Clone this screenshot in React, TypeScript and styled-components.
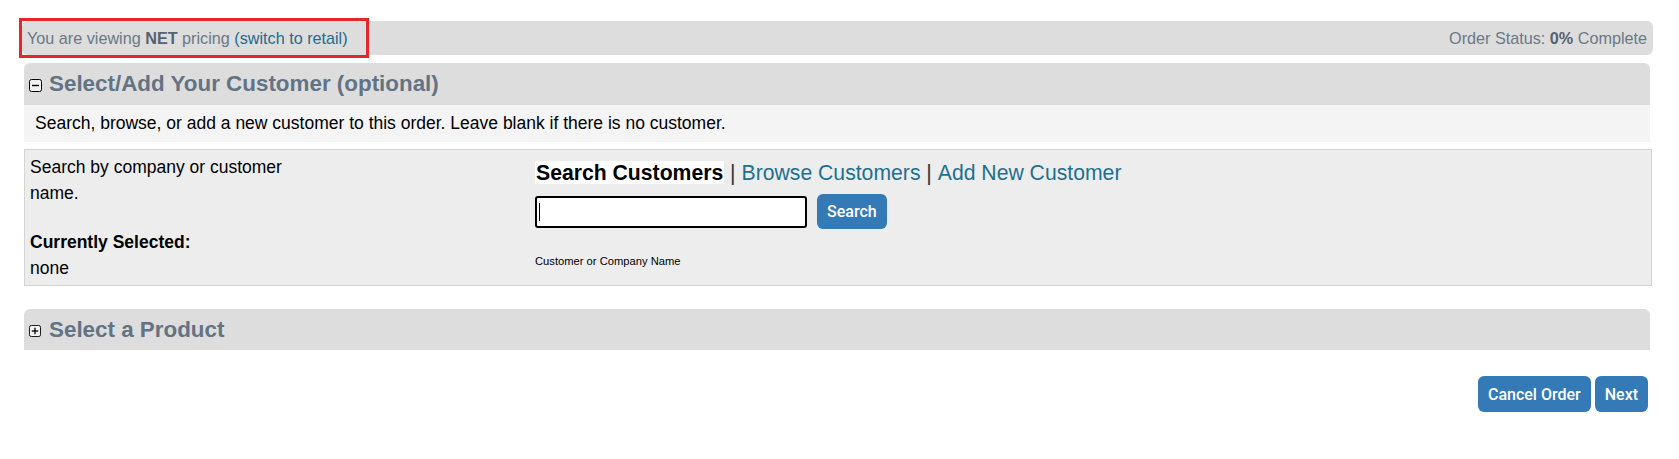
import React from "react";
import styled, { createGlobalStyle } from "styled-components";

const GlobalStyle = createGlobalStyle`
  html, body {
    margin: 0;
    padding: 0;
    background: #ffffff;
    font-family: "Liberation Sans", Arial, sans-serif;
  }
`;

const Page = styled.div`
  padding: 21px 26px 0 22px;
`;

const StatusBar = styled.div`
  display: flex;
  justify-content: space-between;
  align-items: stretch;
  height: 34px;
  background: #dddddd;
  border-radius: 6px;
  font-size: 16.2px;
  color: #6a7886;
`;

const PricingNote = styled.div`
  display: flex;
  align-items: center;
  padding: 0 18px 0 5px;
  outline: 3px solid #e5262a;
  white-space: pre;
`;

const OrderStatus = styled.div`
  display: flex;
  align-items: center;
  padding-right: 6px;
  white-space: pre;
`;

const Strong = styled.b`
  color: #56626e;
`;

const Link = styled.a`
  color: #1f6b8c;
  text-decoration: none;
  cursor: pointer;
`;

const Section = styled.section<{ $gap: number }>`
  margin: ${(p) => p.$gap}px 3px 0 2px;
`;

const SectionHeader = styled.div<{ $height: number }>`
  display: flex;
  align-items: center;
  height: ${(p) => p.$height}px;
  padding-left: 5px;
  background: #dddddd;
  border-radius: 6px 6px 0 0;
`;

const IconSlot = styled.span`
  display: flex;
  align-items: center;
  justify-content: flex-start;
  width: 20px;
  margin-top: 3px;
`;

const SectionTitle = styled.h2`
  margin: 0;
  font-size: 22.4px;
  font-weight: bold;
  color: #637384;
`;

const Description = styled.div`
  display: flex;
  align-items: center;
  height: 37px;
  padding-left: 11px;
  background: #f4f4f4;
  font-size: 17.5px;
  color: #000;
`;

const SearchPanel = styled.div`
  display: grid;
  grid-template-columns: 510px 1fr;
  margin: 7px -2px 0 0;
  height: 137px;
  box-sizing: border-box;
  border: 1px solid #d4d4d4;
  background: #ededed;
`;

const HelpColumn = styled.div`
  padding: 5px 5px 0;
  font-size: 17.5px;
  line-height: 25.5px;
  color: #000;
`;

const HelpText = styled.p`
  margin: 0 0 24px;
  max-width: 290px;
`;

const SelectedLabel = styled.div`
  font-weight: bold;
`;

const SearchColumn = styled.div`
  display: flex;
  flex-direction: column;
  padding-top: 11px;
`;

const TabRow = styled.div`
  display: flex;
  align-items: center;
  font-size: 21.2px;
  line-height: 23px;
  color: #333;
  white-space: pre;
`;

const ActiveTab = styled.span`
  background: #ffffff;
  color: #000;
  font-weight: bold;
  padding: 0 1px;
`;

const TabLink = styled.a`
  color: #21708f;
  text-decoration: none;
  cursor: pointer;
`;

const SearchRow = styled.div`
  display: flex;
  align-items: center;
  gap: 10px;
  margin-top: 10px;
`;

const InputWrap = styled.span`
  position: relative;
  display: inline-flex;
`;

const SearchInput = styled.input`
  width: 272px;
  height: 32px;
  box-sizing: border-box;
  border: 2px solid #000;
  border-radius: 3px;
  background: #fff;
  padding: 0 4px;
  font-size: 16px;
  font-family: "Liberation Sans", Arial, sans-serif;
  outline: none;
`;

/* text cursor sitting at the start of the focused field */
const Caret = styled.span`
  position: absolute;
  left: 4px;
  top: 7px;
  width: 1px;
  height: 18px;
  background: #000;
  pointer-events: none;
`;

const Button = styled.button<{ $height: number }>`
  height: ${(p) => p.$height}px;
  padding: 0 10px;
  border: none;
  border-radius: 6px;
  background: #337ab7;
  color: #ffffff;
  font-family: Roboto, "Liberation Sans", sans-serif;
  font-size: 16px;
  font-weight: 500;
  cursor: pointer;
`;

const FieldLabel = styled.div`
  margin-top: 26px;
  font-size: 11.2px;
  color: #000;
`;

const Footer = styled.div`
  display: flex;
  justify-content: flex-end;
  gap: 4px;
  margin-top: 26px;
  padding-right: 5px;
`;

const ToggleIcon = ({ open, size }: { open: boolean; size: number }) => (
  <svg width={size} height={size} viewBox="0 0 13 13" aria-hidden="true">
    <rect x="0.5" y="0.5" width="12" height="12" rx="2" fill="#f2f2f2" stroke="#000" />
    <line x1="3" y1="6.5" x2="10" y2="6.5" stroke="#000" strokeWidth="1.4" />
    {!open && <line x1="6.5" y1="3" x2="6.5" y2="10" stroke="#000" strokeWidth="1.4" />}
  </svg>
);

export default function App() {
  return (
    <>
      <GlobalStyle />
      <Page>
        <StatusBar>
          <PricingNote>
            You are viewing <Strong>NET</Strong> pricing <Link>(switch to retail)</Link>
          </PricingNote>
          <OrderStatus>
            Order Status: <Strong>0%</Strong> Complete
          </OrderStatus>
        </StatusBar>

        <Section $gap={8}>
          <SectionHeader $height={42}>
            <IconSlot>
              <ToggleIcon open size={13} />
            </IconSlot>
            <SectionTitle>Select/Add Your Customer (optional)</SectionTitle>
          </SectionHeader>
          <Description>
            Search, browse, or add a new customer to this order. Leave blank if there is no customer.
          </Description>
          <SearchPanel>
            <HelpColumn>
              <HelpText>Search by company or customer name.</HelpText>
              <SelectedLabel>Currently Selected:</SelectedLabel>
              <div>none</div>
            </HelpColumn>
            <SearchColumn>
              <TabRow>
                <ActiveTab>Search Customers</ActiveTab>
                {" | "}
                <TabLink>Browse Customers</TabLink>
                {" | "}
                <TabLink>Add New Customer</TabLink>
              </TabRow>
              <SearchRow>
                <InputWrap>
                  <SearchInput type="text" />
                  <Caret />
                </InputWrap>
                <Button $height={35}>Search</Button>
              </SearchRow>
              <FieldLabel>Customer or Company Name</FieldLabel>
            </SearchColumn>
          </SearchPanel>
        </Section>

        <Section $gap={23}>
          <SectionHeader $height={41}>
            <IconSlot>
              <ToggleIcon open={false} size={12} />
            </IconSlot>
            <SectionTitle>Select a Product</SectionTitle>
          </SectionHeader>
        </Section>

        <Footer>
          <Button $height={36}>Cancel Order</Button>
          <Button $height={36}>Next</Button>
        </Footer>
      </Page>
    </>
  );
}
